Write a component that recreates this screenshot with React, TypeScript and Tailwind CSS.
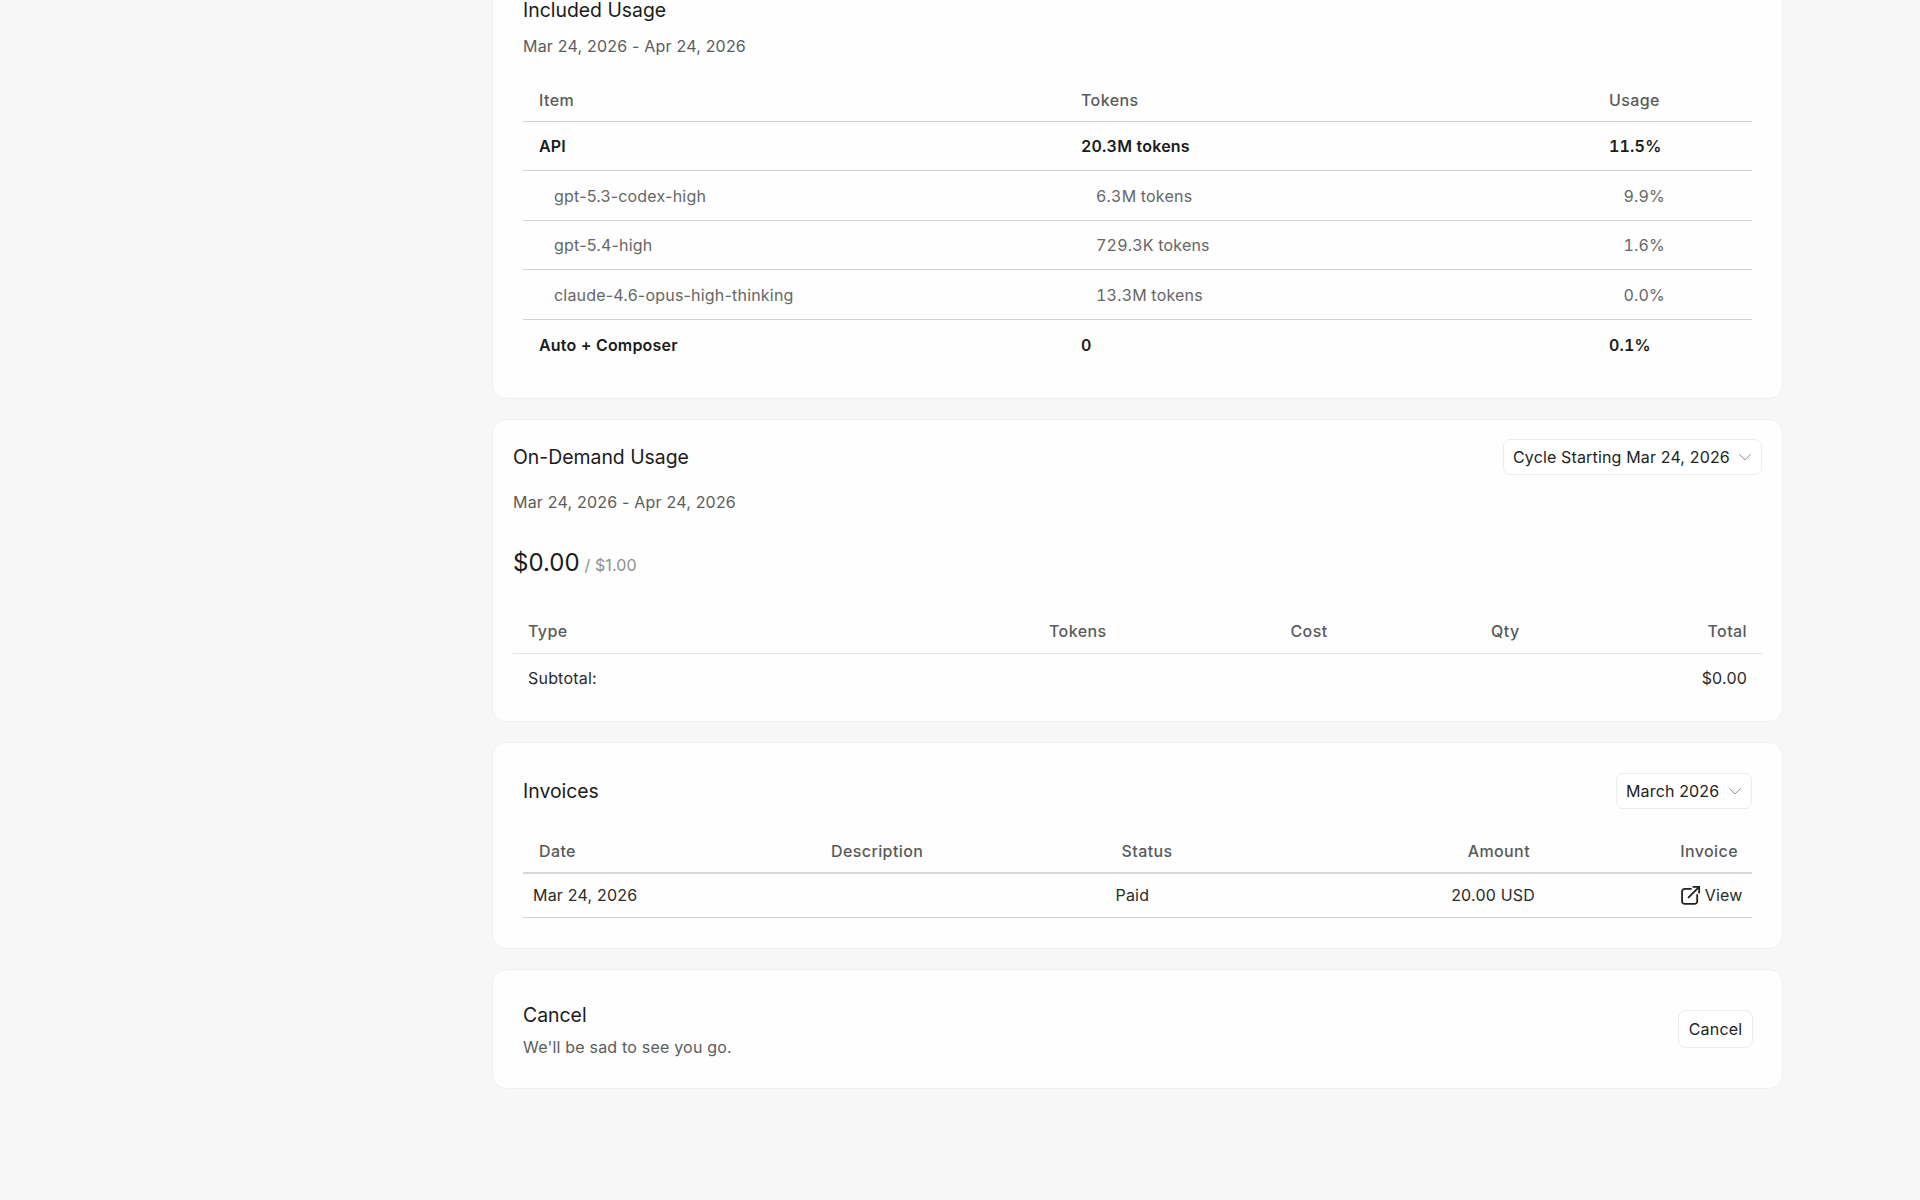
import React from "react";

const font = "font-['Inter',sans-serif]";

function Chevron() {
  return (
    <svg width="20" height="20" viewBox="0 0 24 24" fill="none" stroke="#8f8f8f" strokeWidth="1.2" strokeLinecap="round" strokeLinejoin="round">
      <path d="M5.5 9l6.5 6.5L18.500 9" />
    </svg>
  );
}

function Select({ label, w }: { label: string; w: string }) {
  return (
    <div className={`flex h-[36px] items-center justify-between rounded-[7px] border border-[#ececec] bg-white pl-[9px] pr-[6.500px] text-[16px] tracking-[0.15px] text-[#222] ${w}`}>
      <span>{label}</span>
      <Chevron />
    </div>
  );
}

const Card = ({ className, children }: { className: string; children: React.ReactNode }) => (
  <section className={`w-[1291px] rounded-[14px] border border-[#f0f0f0] bg-[#fefefe] ${className}`}>{children}</section>
);

const usageRows = [
  { item: "API", tokens: "20.3M tokens", usage: "11.5%", bold: true },
  { item: "gpt-5.3-codex-high", tokens: "6.3M tokens", usage: "9.9%", bold: false },
  { item: "gpt-5.4-high", tokens: "729.3K tokens", usage: "1.6%", bold: false },
  { item: "claude-4.6-opus-high-thinking", tokens: "13.3M tokens", usage: "0.0%", bold: false },
  { item: "Auto + Composer", tokens: "0", usage: "0.1%", bold: true },
];

const headerText = "text-[16px] font-medium tracking-[0.4px] text-[#5a5a5a]";
const bodyText = "text-[16px] tracking-[0.2px]";
const title = "text-[19.4px] font-normal leading-[24px] text-[#1b1b1b]";
const subtitle = "h-[20px] text-[16px] leading-[20px] tracking-[0.2px] text-[#5c5c5c]";

export default function App() {
  return (
    <div className={`${font} h-[1200px] overflow-hidden bg-[#f7f7f7]`}>
      <div className="-mt-[32px] ml-[492px] flex flex-col gap-[20px]">
        {/* Included usage */}
        <Card className="px-[30px] pb-[29px] pt-[31px]">
          <h2 className="h-[20px] text-[19.4px] font-normal leading-[20px] text-[#1b1b1b]">Included Usage</h2>
          <p className={`mt-[16px] ${subtitle}`}>Mar 24, 2026 - Apr 24, 2026</p>
          <div className={`mt-[23px] grid h-[42.5px] grid-cols-[542px_528px_1fr] items-center border-b border-[#d2d2d2] ${headerText}`}>
            <span className="pl-[16px]">Item</span>
            <span className="pl-[16px]">Tokens</span>
            <span className="pl-[16px]">Usage</span>
          </div>
          {usageRows.map((r, i) => (
            <div
              key={r.item}
              className={`grid h-[49.5px] grid-cols-[542px_528px_1fr] items-center pt-[1px] ${bodyText} ${i < usageRows.length - 1 ? "border-b border-[#d2d2d2]" : ""} ${r.bold ? "font-semibold text-[#1b1b1b]" : "font-normal text-[#666]"}`}
            >
              <span className={r.bold ? "pl-[16px]" : "pl-[31px]"}>{r.item}</span>
              <span className={`tabular-nums ${r.bold ? "pl-[16px]" : "pl-[31px]"}`}>{r.tokens}</span>
              <span className="pl-[16px] tabular-nums">
                <span className={r.bold ? "" : "inline-block w-[56px] text-right"}>{r.usage}</span>
              </span>
            </div>
          ))}
        </Card>

        {/* On-demand usage */}
        <Card className="h-[303px] px-[20px] pt-[19px]">
          <div className="flex items-center justify-between">
            <h2 className={title}>On-Demand Usage</h2>
            <Select label="Cycle Starting Mar 24, 2026" w="w-[259px]" />
          </div>
          <p className={`mt-[17px] ${subtitle}`}>Mar 24, 2026 - Apr 24, 2026</p>
          <div className="mt-[34.500px] flex h-[32px] items-baseline gap-[5px] leading-[32px]">
            <span className="text-[24px] text-[#1b1b1b]">$0.00</span>
            <span className="text-[16px] tracking-[0.1px] text-[#8f8f8f]">/ $1.00</span>
          </div>
          <div className={`mt-[31px] grid h-[44px] grid-cols-[400px_208.5px_221px_192px_1fr] items-center border-b border-[#e6e6e6] ${headerText}`}>
            <span className="pl-[15px]">Type</span>
            <span className="pr-[15px] text-right">Tokens</span>
            <span className="pr-[15px] text-right">Cost</span>
            <span className="pr-[15px] text-right">Qty</span>
            <span className="pr-[15px] text-right">Total</span>
          </div>
          <div className={`flex h-[49px] items-center justify-between px-[15px] ${bodyText} text-[#2a2a2a]`}>
            <span>Subtotal:</span>
            <span>$0.00</span>
          </div>
        </Card>

        {/* Invoices */}
        <Card className="h-[207px] px-[30px] pt-[29.500px]">
          <div className="flex items-center justify-between">
            <h2 className={title}>Invoices</h2>
            <Select label="March 2026" w="w-[136px]" />
          </div>
          <div className={`mt-[22px] grid h-[43px] grid-cols-[292px_290.5px_200px_239.5px_1fr] items-center border-b-2 border-[#d8d8d8] ${headerText}`}>
            <span className="pl-[16px]">Date</span>
            <span className="pl-[16px]">Description</span>
            <span className="pl-[16px]">Status</span>
            <span className="pr-[15px] text-right">Amount</span>
            <span className="pr-[14px] text-right">Invoice</span>
          </div>
          <div className={`grid h-[44px] grid-cols-[292px_290.5px_200px_239.5px_1fr] items-center border-b border-[#d2d2d2] ${bodyText} text-[#2a2a2a]`}>
            <span className="pl-[10px]">Mar 24, 2026</span>
            <span />
            <span className="pl-[10px]">Paid</span>
            <span className="pr-[10px] text-right">20.00 USD</span>
            <span className="flex items-center justify-end gap-[3px] pr-[9.500px]">
              <svg width="23" height="23" viewBox="0 0 24 24" fill="none" stroke="#222" strokeWidth="1.9" strokeLinecap="round" strokeLinejoin="round">
                <path d="M12.5 5H6a2.800 2.800 0 0 0-2.800 2.800V18A2.800 2.800 0 0 0 6 20.800h10.200A2.800 2.800 0 0 0 19 18v-6.500" />
                <path d="M10 14L21 3" />
                <path d="M15 3h6v6" />
              </svg>
              View
            </span>
          </div>
        </Card>

        {/* Cancel */}
        <Card className="flex h-[119.5px] items-center justify-between pl-[30px] pr-[29px]">
          <div className="pt-[3px]">
            <h2 className={`h-[24px] ${title}`}>Cancel</h2>
            <p className={`mt-[10px] ${subtitle}`}>We'll be sad to see you go.</p>
          </div>
          <button className="flex h-[38px] w-[75px] items-center justify-center rounded-[8px] border border-[#ececec] bg-white pt-[1px] text-[16px] tracking-[0.2px] text-[#222]">Cancel</button>
        </Card>
      </div>
    </div>
  );
}
